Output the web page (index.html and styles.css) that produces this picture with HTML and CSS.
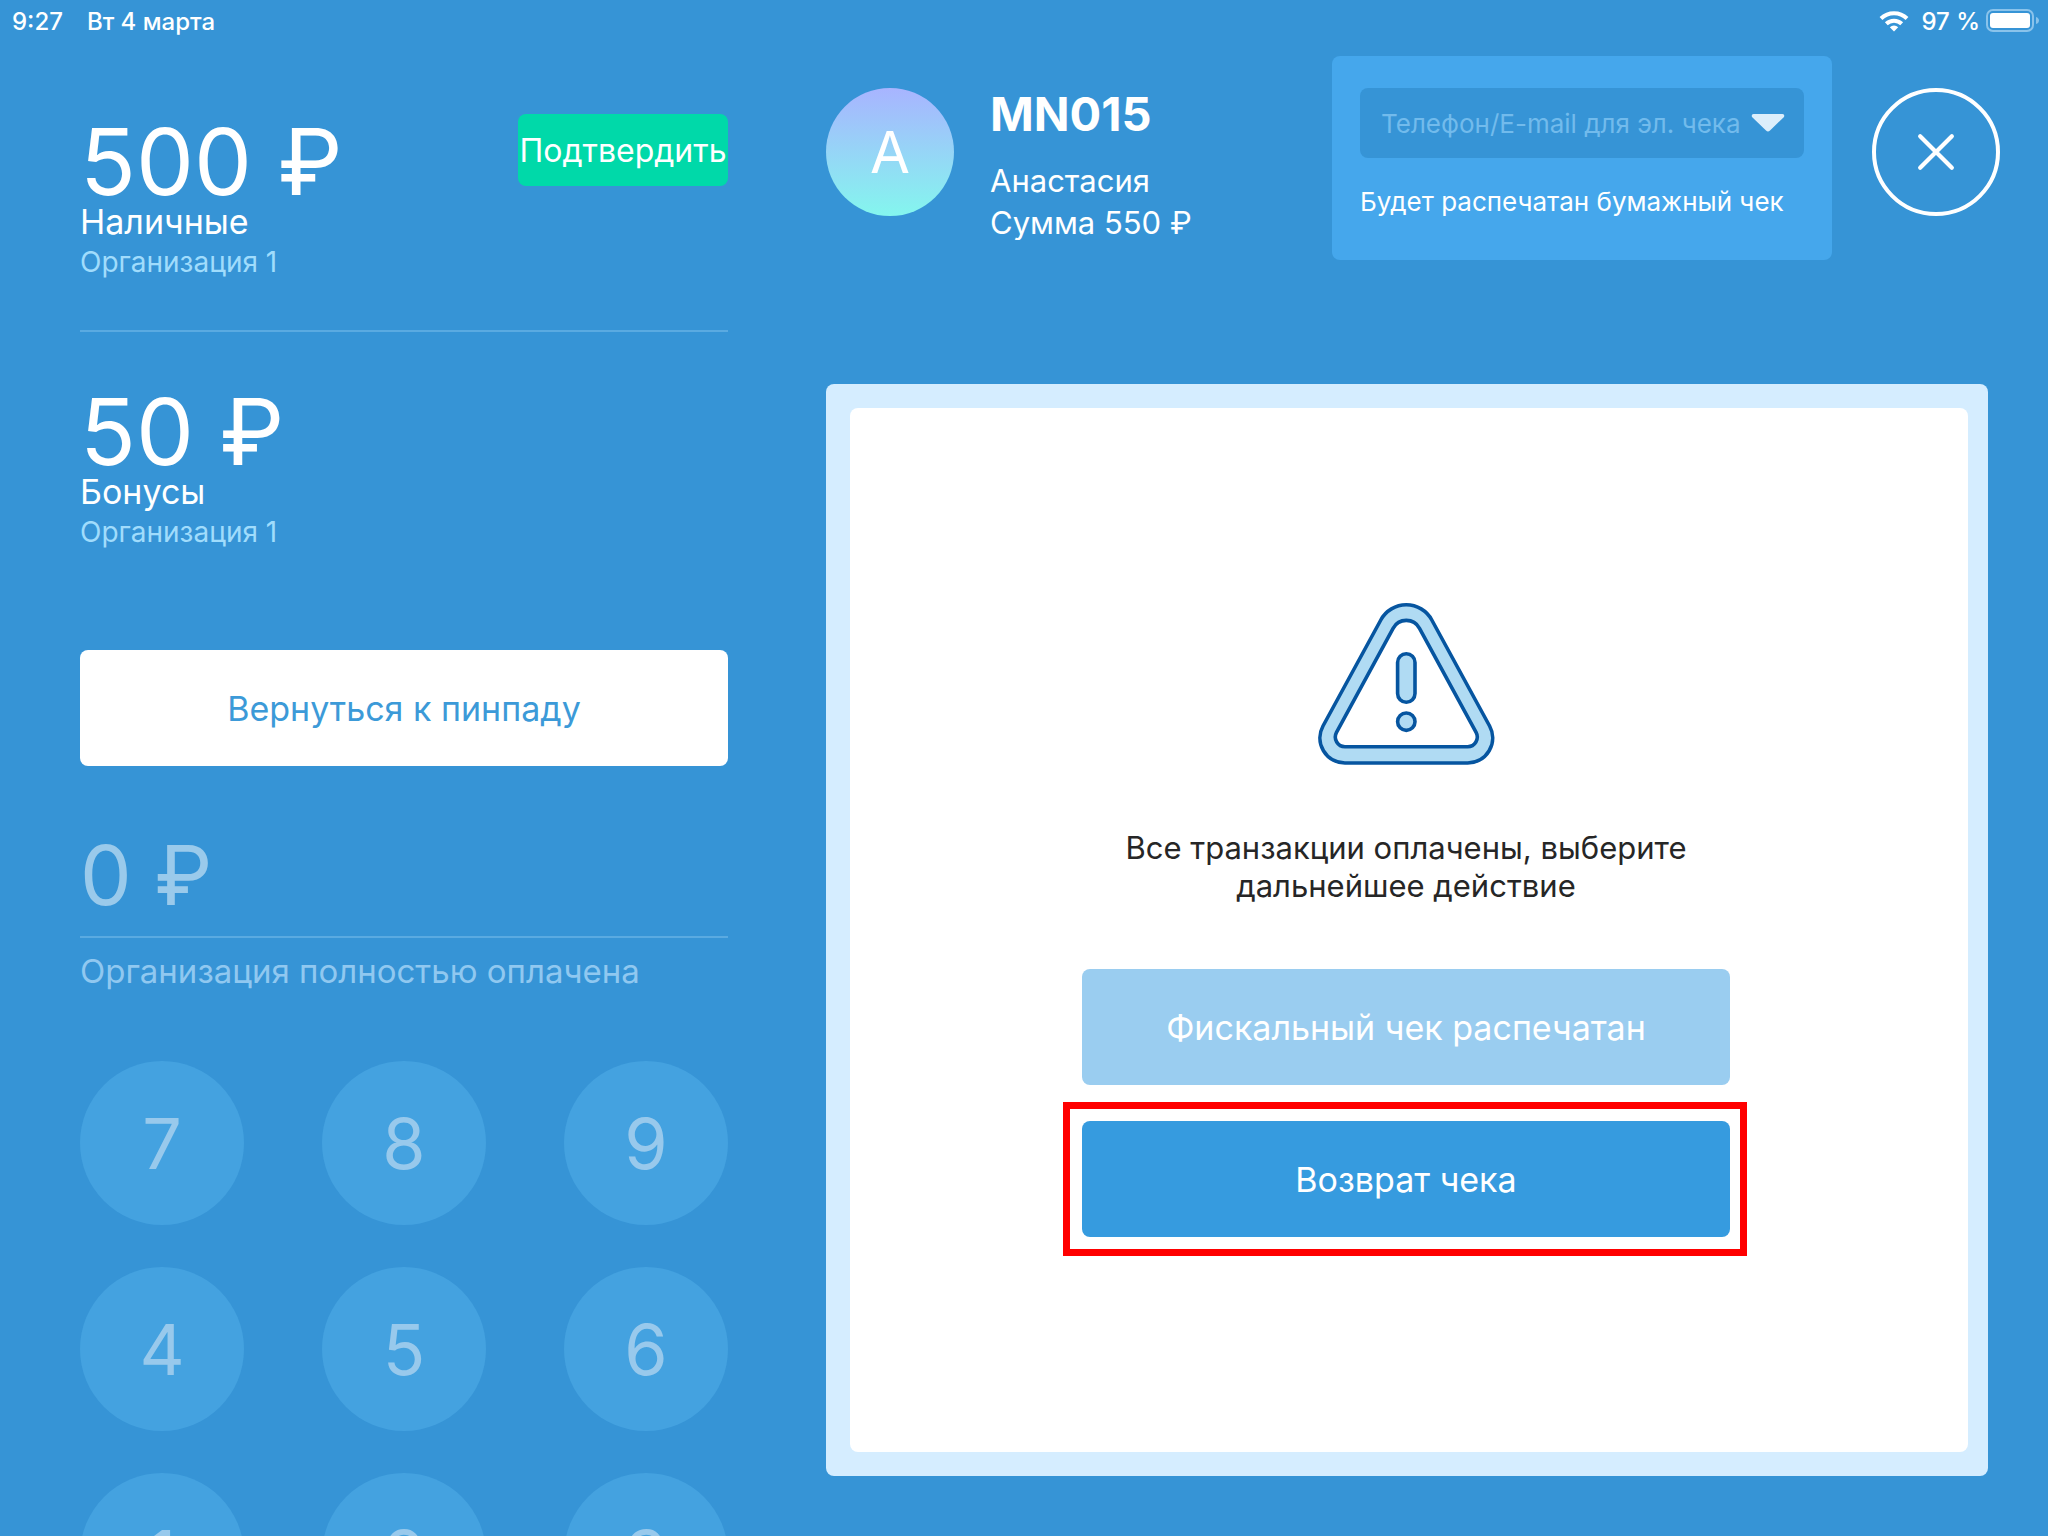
FILE: index.html
```html
<!DOCTYPE html>
<html lang="ru">
<head>
<meta charset="utf-8">
<meta name="viewport" content="width=device-width, initial-scale=1">
<title>Оплата MN015</title>
<link rel="stylesheet" href="styles.css">
</head>
<body>
<div class="statusbar">
  <div class="statusbar-group">
    <time>9:27</time>
    <span>Вт 4 марта</span>
  </div>
  <div class="statusbar-group statusbar-right">
    <svg class="wifi" viewBox="0 0 30 22" aria-hidden="true">
      <g fill="none" stroke="#fff" stroke-width="4">
        <path d="M2 8.500 A18.500 18.500 0 0 1 28 8.500"/>
        <path d="M7.300 13.800 A11 11 0 0 1 22.700 13.800"/>
      </g>
      <path d="M15 21.500 L10.800 17.300 A6 6 0 0 1 19.200 17.300 Z" fill="#fff"/>
    </svg>
    <span>97 %</span>
    <svg class="battery" viewBox="0 0 54 24" aria-hidden="true">
      <rect x="1" y="1" width="46" height="21" rx="6" fill="none" stroke="#8ac3eb" stroke-width="2"/>
      <rect x="4" y="4" width="40" height="15" rx="3" fill="#fff"/>
      <path d="M50 8 C54 9 54 14 50 15 Z" fill="#8ac3eb"/>
    </svg>
  </div>
</div>

<div class="screen">
  <aside class="payments">
    <section class="payment">
      <div class="payment-head">
        <p class="amount">500 ₽</p>
        <button class="confirm" type="button">Подтвердить</button>
      </div>
      <p class="payment-type">Наличные</p>
      <p class="payment-org">Организация 1</p>
    </section>
    <section class="payment">
      <div class="payment-head">
        <p class="amount">50 ₽</p>
      </div>
      <p class="payment-type">Бонусы</p>
      <p class="payment-org">Организация 1</p>
    </section>
    <button class="action action-light" type="button">Вернуться к пинпаду</button>
    <p class="remainder">0 ₽</p>
    <p class="remainder-note">Организация полностью оплачена</p>
    <div class="keypad">
      <button type="button">7</button>
      <button type="button">8</button>
      <button type="button">9</button>
      <button type="button">4</button>
      <button type="button">5</button>
      <button type="button">6</button>
      <button type="button">1</button>
      <button type="button">2</button>
      <button type="button">3</button>
    </div>
  </aside>

  <main class="order">
    <header class="order-head">
      <div class="avatar">А</div>
      <div class="customer">
        <h1>MN015</h1>
        <p>Анастасия</p>
        <p>Сумма 550 ₽</p>
      </div>
      <div class="receipt">
        <div class="contact">
          <input type="text" placeholder="Телефон/E-mail для эл. чека" aria-label="Телефон/E-mail для эл. чека">
          <button type="button" aria-label="Показать список">
            <svg viewBox="0 0 34 18" aria-hidden="true"><path d="M2.500 0 H31.500 Q34 0.500 33 3 L19 16.500 Q17 18.500 15 16.500 L1 3 Q0 0.500 2.500 0 Z" fill="#dceefb"/></svg>
          </button>
        </div>
        <p>Будет распечатан бумажный чек</p>
      </div>
      <button class="close" type="button" aria-label="Закрыть">
        <svg viewBox="0 0 36 36" aria-hidden="true"><path d="M3 3 L33 33 M33 3 L3 33" stroke="#fff" stroke-width="4" stroke-linecap="round"/></svg>
      </button>
    </header>

    <section class="card">
      <div class="card-body">
        <svg class="warning" viewBox="0 0 177 162" aria-hidden="true">
          <g stroke="#0655a0" stroke-width="3.600" fill="#b0dbf3">
            <path d="M62.800 17 A29 29 0 0 1 113.800 17 L171.600 123 A25 25 0 0 1 149.600 160 H27 A25 25 0 0 1 5 123 Z"/>
            <path d="M75.100 25.300 A15 15 0 0 1 101.500 25.300 L158.100 129.400 A9.700 9.700 0 0 1 149.600 143.700 H27 A9.700 9.700 0 0 1 18.500 129.400 Z" fill="#fff"/>
            <rect x="79.600" y="50.700" width="17.400" height="48.600" rx="8.700"/>
            <circle cx="88.300" cy="118.700" r="8.700"/>
          </g>
        </svg>
        <p class="message">Все транзакции оплачены, выберите дальнейшее действие</p>
        <div class="actions">
          <button class="action action-disabled" type="button" disabled>Фискальный чек распечатан</button>
          <div class="highlighted">
            <button class="action action-primary" type="button">Возврат чека</button>
          </div>
        </div>
      </div>
    </section>
  </main>
</div>
</body>
</html>
```
FILE: styles.css
```css
* {
  box-sizing: border-box;
}

body {
  margin: 0;
  height: 100vh;
  overflow: hidden;
  display: flex;
  flex-direction: column;
  background: #3694d6;
  color: #fff;
  font-family: Inter, "Liberation Sans", sans-serif;
  font-size: 32px;
}

p,
h1 {
  margin: 0;
}

button,
input {
  font: inherit;
  color: inherit;
  border: 0;
  padding: 0;
  background: none;
}

svg {
  display: block;
}

/* Status bar */

.statusbar {
  flex: none;
  display: flex;
  justify-content: space-between;
  height: 42px;
  padding: 0 8px 0 12px;
  font-size: 24px;
  font-weight: 500;
}

.statusbar-group {
  display: flex;
  align-items: center;
  gap: 24px;
}

.statusbar-right {
  gap: 6px;
}

.wifi {
  width: 30px;
  height: 22px;
  margin-right: 6px;
}

.battery {
  width: 54px;
  height: 24px;
}

/* Columns */

.screen {
  flex: 1;
  min-height: 0;
  display: grid;
  grid-template-columns: 648px minmax(0, 1fr);
  grid-template-rows: minmax(0, 1fr);
  gap: 98px;
  padding: 14px 48px 0 80px;
}

/* Payments and keypad */

.payments {
  overflow: hidden;
}

.payment {
  padding: 58px 0 48px;
}

.payment + .payment {
  border-top: 2px solid #5aaae1;
  padding: 52px 0 98px;
}

.payment-head {
  display: flex;
  justify-content: space-between;
  align-items: flex-start;
}

.amount {
  font-size: 92px;
  line-height: 96px;
}

.confirm {
  width: 210px;
  height: 72px;
  border-radius: 8px;
  background: #00d9a9;
  font-size: 32px;
}

.payment-type {
  font-size: 34px;
  line-height: 24px;
}

.payment-org {
  margin-top: 8px;
  font-size: 28px;
  line-height: 40px;
  color: #a0dcfc;
}

.action {
  display: block;
  width: 100%;
  height: 116px;
  border-radius: 8px;
  font-size: 34px;
}

.action-light {
  background: #fff;
  color: #3c9ad8;
}

.action-disabled {
  background: #9acdf0;
  color: #fff;
}

.action-primary {
  background: #369bdf;
}

.remainder {
  margin-top: 70px;
  padding-bottom: 20px;
  border-bottom: 2px solid #5aaae1;
  font-size: 82px;
  line-height: 80px;
  color: #9acaeb;
}

.remainder-note {
  margin-top: 13px;
  font-size: 33px;
  line-height: 40px;
  color: #90c8f0;
}

.keypad {
  display: grid;
  grid-template-columns: repeat(3, 164px);
  justify-content: space-between;
  gap: 42px 0;
  margin-top: 70px;
}

.keypad button {
  height: 164px;
  border-radius: 50%;
  background: #44a2e0;
  color: #98c9ec;
  font-size: 70px;
}

/* Order header */

.order {
  display: flex;
  flex-direction: column;
  padding-bottom: 60px;
}

.order-head {
  display: flex;
  align-items: flex-start;
  gap: 36px;
}

.avatar {
  flex: none;
  display: flex;
  align-items: center;
  justify-content: center;
  width: 128px;
  height: 128px;
  margin-top: 32px;
  border-radius: 50%;
  background: linear-gradient(#a8b4ff, #84f6ee);
  font-size: 58px;
}

.customer {
  flex: 1;
  padding-top: 32px;
  font-size: 31px;
  line-height: 34px;
}

.customer h1 {
  margin-bottom: 24px;
  font-size: 47px;
  line-height: 52px;
  font-weight: 700;
}

.customer p {
  overflow: hidden;
}

.customer p + p {
  margin-top: 8px;
}

.receipt {
  flex: none;
  width: 500px;
  padding: 32px 28px 42px;
  border-radius: 8px;
  background: #45a7ec;
  font-size: 26px;
}

.receipt p {
  margin-top: 28px;
  line-height: 32px;
}

.contact {
  display: flex;
  align-items: center;
  height: 70px;
  padding: 0 19px 0 21px;
  border-radius: 8px;
  background: #3694d6;
}

.contact input {
  flex: 1;
  min-width: 0;
  outline: 0;
}

.contact input::placeholder {
  color: #72bbec;
  opacity: 1;
}

.contact button {
  width: 34px;
}

.close {
  flex: none;
  display: flex;
  align-items: center;
  justify-content: center;
  width: 128px;
  height: 128px;
  margin: 32px 0 0 4px;
  border: 4px solid #fff;
  border-radius: 50%;
}

.close svg {
  width: 38px;
  height: 38px;
}

/* Result card */

.card {
  flex: 1;
  display: flex;
  margin: 124px 12px 0 0;
  padding: 24px 20px 24px 24px;
  border-radius: 8px;
  background: #d5edff;
}

.card-body {
  flex: 1;
  display: flex;
  flex-direction: column;
  align-items: center;
  justify-content: center;
  gap: 64px;
  padding: 0 6px 20px 0;
  border-radius: 8px;
  background: #fff;
}

.warning {
  width: 177px;
  height: 162px;
}

.message {
  max-width: 600px;
  font-size: 31px;
  line-height: 38px;
  text-align: center;
  color: #262626;
}

.actions {
  display: grid;
  gap: 36px;
  width: 648px;
}

.highlighted {
  position: relative;
}

.highlighted::after {
  content: "";
  position: absolute;
  inset: -19px -17px -19px -19px;
  border: 7px solid #f00;
  pointer-events: none;
}
```
